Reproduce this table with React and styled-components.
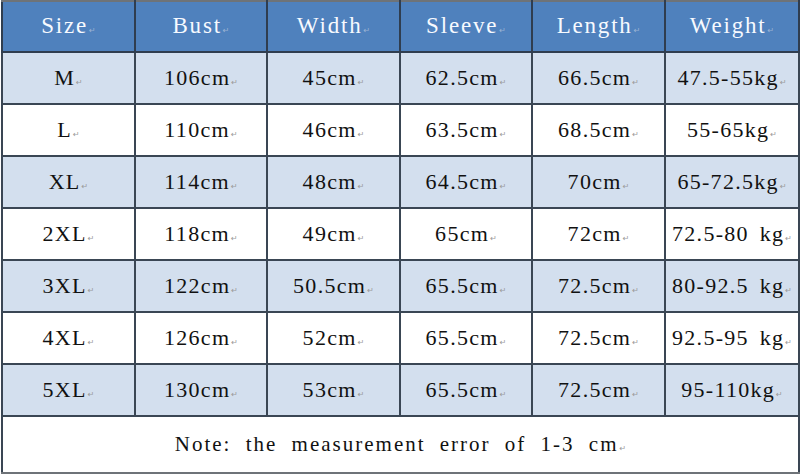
import React from "react";
import styled, { createGlobalStyle } from "styled-components";

const Global = createGlobalStyle`
  html, body { margin: 0; padding: 0; background: #ffffff; }
  body { font-family: "Liberation Serif", "Noto Sans CJK SC", serif; }
`;

const Page = styled.div`
  width: 800px;
  height: 476px;
  padding: 0 0 0 1px;
  box-sizing: border-box;
  background: #ffffff;
`;

const Table = styled.table`
  border-collapse: collapse;
  table-layout: fixed;
  width: 797px;
  border: 2px solid #6e7378;
`;

const Col = styled.col`
  width: ${(p) => p.$w}px;
`;

const HeadCell = styled.th`
  height: 47px;
  padding: 0 0 2px;
  background: #4f81bd;
  color: #f7faff;
  font-family: "Liberation Serif", serif;
  font-weight: normal;
  font-size: 23px;
  letter-spacing: 1.8px;
  white-space: nowrap;
  text-align: center;
  vertical-align: middle;
  border: 2px solid #2f3d4f;
  border-top-color: #6e7378;
`;

const Cell = styled.td`
  height: 50px;
  padding: 0;
  background: ${(p) => (p.$shade ? "#d3dfee" : "#ffffff")};
  color: #111111;
  font-family: "Liberation Serif", serif;
  font-size: 22px;
  letter-spacing: 1.3px;
  word-spacing: 4px;
  white-space: nowrap;
  text-align: center;
  vertical-align: middle;
  border: 2px solid #3a4654;
`;

const NoteCell = styled.td`
  height: 55px;
  padding: 0;
  background: #ffffff;
  color: #111111;
  font-family: "Liberation Serif", serif;
  font-size: 21px;
  letter-spacing: 2px;
  word-spacing: 7px;
  white-space: nowrap;
  text-align: center;
  vertical-align: middle;
  border: 2px solid #3a4654;
  border-bottom-color: #6e7378;
`;

const Mark = styled.span`
  font-size: 8px;
  letter-spacing: 0;
  color: ${(p) => (p.$light ? "#9bb3d3" : "#9a9a9a")};
  margin-left: 1px;
  font-family: "DejaVu Sans", sans-serif;
`;

const headers = ["Size", "Bust", "Width", "Sleeve", "Length", "Weight"];
const rows = [
  ["M", "106cm", "45cm", "62.5cm", "66.5cm", "47.5-55kg"],
  ["L", "110cm", "46cm", "63.5cm", "68.5cm", "55-65kg"],
  ["XL", "114cm", "48cm", "64.5cm", "70cm", "65-72.5kg"],
  ["2XL", "118cm", "49cm", "65cm", "72cm", "72.5-80 kg"],
  ["3XL", "122cm", "50.5cm", "65.5cm", "72.5cm", "80-92.5 kg"],
  ["4XL", "126cm", "52cm", "65.5cm", "72.5cm", "92.5-95 kg"],
  ["5XL", "130cm", "53cm", "65.5cm", "72.5cm", "95-110kg"],
];
const widths = [133, 132, 133, 132, 133, 134];

export default function App() {
  return (
    <>
      <Global />
      <Page>
        <Table>
          <colgroup>
            {widths.map((w, i) => (
              <Col key={i} $w={w} />
            ))}
          </colgroup>
          <thead>
            <tr>
              {headers.map((h) => (
                <HeadCell key={h}>
                  {h}
                  <Mark $light>↵</Mark>
                </HeadCell>
              ))}
            </tr>
          </thead>
          <tbody>
            {rows.map((r, i) => (
              <tr key={i}>
                {r.map((c, j) => (
                  <Cell key={j} $shade={i % 2 === 0}>
                    {c}
                    <Mark>↵</Mark>
                  </Cell>
                ))}
              </tr>
            ))}
            <tr>
              <NoteCell colSpan={6}>
                Note: the measurement error of 1-3 cm
                <Mark>↵</Mark>
              </NoteCell>
            </tr>
          </tbody>
        </Table>
      </Page>
    </>
  );
}
